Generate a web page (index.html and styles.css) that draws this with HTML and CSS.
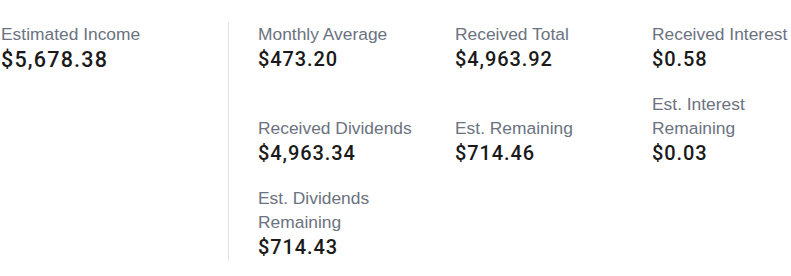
FILE: index.html
```html
<!DOCTYPE html>
<html>
<head>
<meta charset="utf-8">
<link rel="stylesheet" href="styles.css">
</head>
<body>
<div class="summary">
  <div class="main">
    <div class="stat">
      <div class="label">Estimated Income</div>
      <div class="value value-lg">$5,678.38</div>
    </div>
  </div>
  <div class="grid">
    <div class="stat">
      <div class="label">Monthly Average</div>
      <div class="value">$473.20</div>
    </div>
    <div class="stat">
      <div class="label">Received Total</div>
      <div class="value">$4,963.92</div>
    </div>
    <div class="stat">
      <div class="label">Received Interest</div>
      <div class="value">$0.58</div>
    </div>
    <div class="stat">
      <div class="label">Received Dividends</div>
      <div class="value">$4,963.34</div>
    </div>
    <div class="stat">
      <div class="label">Est. Remaining</div>
      <div class="value">$714.46</div>
    </div>
    <div class="stat">
      <div class="label">Est. Interest<br>Remaining</div>
      <div class="value">$0.03</div>
    </div>
    <div class="stat">
      <div class="label">Est. Dividends<br>Remaining</div>
      <div class="value">$714.43</div>
    </div>
  </div>
</div>
</body>
</html>
```
FILE: styles.css
```css
html, body {
  margin: 0;
  padding: 0;
  background: #ffffff;
}

body {
  font-family: "Liberation Sans", Arial, sans-serif;
  overflow: hidden;
}

.summary {
  display: flex;
  align-items: stretch;
  padding-top: 22px;
}

.main {
  width: 228px;
  flex: none;
  padding-left: 1px;
  box-sizing: border-box;
}

.grid {
  flex: 1;
  min-width: 0;
  display: grid;
  grid-template-columns: 180px 180px 1fr;
  column-gap: 17px;
  row-gap: 20px;
  align-items: end;
  border-left: 1px solid #e3e3e3;
  padding-left: 29px;
  padding-bottom: 1px;
}

.stat {
  display: flex;
  flex-direction: column;
}

.label {
  font-size: 17.4px;
  line-height: 24px;
  color: #6b7280;
  white-space: nowrap;
}

.value {
  font-family: Roboto, "Liberation Sans", Arial, sans-serif;
  font-size: 20px;
  line-height: 26px;
  font-weight: 500;
  color: #1a1a1a;
  letter-spacing: 0.9px;
}

.value-lg {
  font-size: 21.5px;
  letter-spacing: 1.2px;
  line-height: 28px;
}
```
